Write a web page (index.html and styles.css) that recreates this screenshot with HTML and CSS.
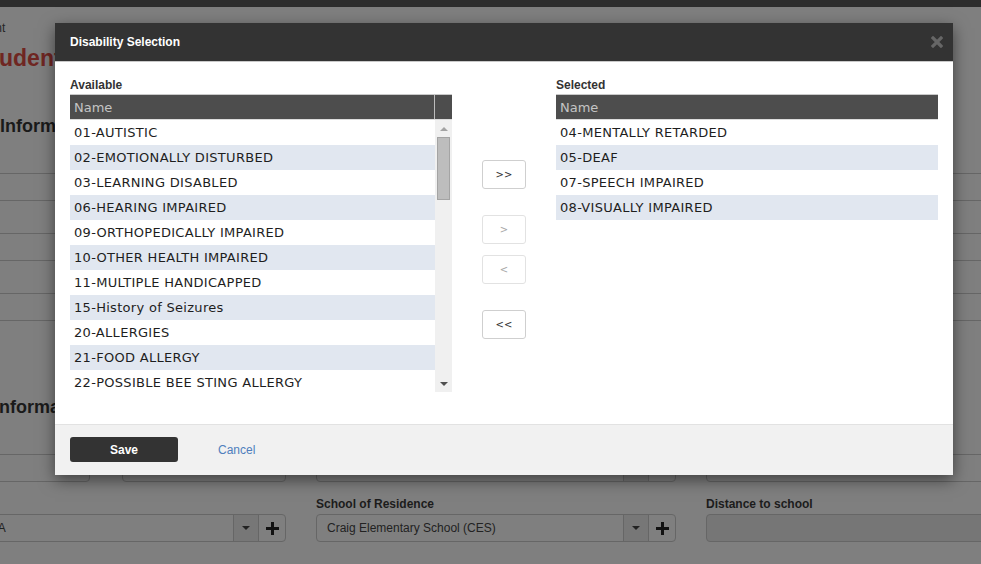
FILE: index.html
```html
<!DOCTYPE html>
<html lang="en">
<head>
<meta charset="utf-8">
<title>Disability Selection</title>
<link rel="stylesheet" href="styles.css">
</head>
<body>
<div class="page">
  <div class="topbar"></div>
  <div class="crumb">Student</div>
  <h1 class="page-title">Student Information</h1>
  <h2 class="section">Information</h2>
  <div class="fieldbox"></div>
  <div class="fieldbox"></div>
  <div class="fieldbox"></div>
  <h2 class="section section-2">Information</h2>
  <div class="form-row row-a">
    <div class="split">
      <div class="input w-a"></div>
      <div class="input grow"></div>
    </div>
    <div class="input combo">
      <span class="combo-text"></span>
      <span class="addon caret-addon"><span class="caret"></span></span>
      <span class="addon plus-addon"><svg width="13" height="13" viewBox="0 0 13 13"><rect x="5" y="0" width="3" height="13" fill="#121212"/><rect x="0" y="5" width="13" height="3" fill="#121212"/></svg></span>
    </div>
    <div class="input"></div>
  </div>
  <div class="form-row row-b">
    <div class="field">
      <div class="field-label">&nbsp;</div>
      <div class="input combo">
        <span class="combo-text">NA</span>
        <span class="addon caret-addon"><span class="caret"></span></span>
        <span class="addon plus-addon"><svg width="13" height="13" viewBox="0 0 13 13"><rect x="5" y="0" width="3" height="13" fill="#121212"/><rect x="0" y="5" width="13" height="3" fill="#121212"/></svg></span>
      </div>
    </div>
    <div class="field">
      <div class="field-label">School of Residence</div>
      <div class="input combo">
        <span class="combo-text">Craig Elementary School (CES)</span>
        <span class="addon caret-addon"><span class="caret"></span></span>
        <span class="addon plus-addon"><svg width="13" height="13" viewBox="0 0 13 13"><rect x="5" y="0" width="3" height="13" fill="#121212"/><rect x="0" y="5" width="13" height="3" fill="#121212"/></svg></span>
      </div>
    </div>
    <div class="field">
      <div class="field-label">Distance to school</div>
      <div class="input disabled"></div>
    </div>
  </div>
</div>

<div class="modal">
  <div class="modal-header">
    <span class="modal-title">Disability Selection</span>
    <span class="close"><svg width="12" height="12" viewBox="0 0 12 12"><path d="M2 2 L10 10 M10 2 L2 10" stroke="#666" stroke-width="3.2" stroke-linecap="square"/></svg></span>
  </div>
  <div class="modal-body">
    <div class="pane">
      <div class="pane-label">Available</div>
      <div class="grid-head">
        <div class="th">Name</div>
        <div class="th-scroll"></div>
      </div>
      <div class="grid-body">
        <div class="rows">
          <div class="row">01-AUTISTIC</div>
          <div class="row">02-EMOTIONALLY DISTURBED</div>
          <div class="row">03-LEARNING DISABLED</div>
          <div class="row">06-HEARING IMPAIRED</div>
          <div class="row">09-ORTHOPEDICALLY IMPAIRED</div>
          <div class="row">10-OTHER HEALTH IMPAIRED</div>
          <div class="row">11-MULTIPLE HANDICAPPED</div>
          <div class="row">15-History of Seizures</div>
          <div class="row">20-ALLERGIES</div>
          <div class="row">21-FOOD ALLERGY</div>
          <div class="row">22-POSSIBLE BEE STING ALLERGY</div>
          <div class="row">23-ASTHMA</div>
          <div class="row">24-DIABETES</div>
        </div>
        <div class="scrollbar">
          <span class="sb-btn"><span class="tri-up"></span></span>
          <span class="thumb"></span>
          <span class="sb-fill"></span>
          <span class="sb-btn"><span class="tri-down"></span></span>
        </div>
      </div>
    </div>
    <div class="mover">
      <button class="mv mv-all-right">&gt;&gt;</button>
      <button class="mv mv-right" disabled>&gt;</button>
      <button class="mv mv-left" disabled>&lt;</button>
      <button class="mv mv-all-left">&lt;&lt;</button>
    </div>
    <div class="pane">
      <div class="pane-label">Selected</div>
      <div class="grid-head">
        <div class="th">Name</div>
      </div>
      <div class="rows selected-rows">
        <div class="row">04-MENTALLY RETARDED</div>
        <div class="row">05-DEAF</div>
        <div class="row">07-SPEECH IMPAIRED</div>
        <div class="row">08-VISUALLY IMPAIRED</div>
      </div>
    </div>
  </div>
  <div class="modal-footer">
    <button class="btn-save">Save</button>
    <a class="btn-cancel">Cancel</a>
  </div>
</div>
</body>
</html>
```
FILE: styles.css
```css
html, body {
  margin: 0;
  padding: 0;
}
body {
  width: 981px;
  height: 564px;
  overflow: hidden;
  background: #7f7f7f;
  font-family: "Liberation Sans", Arial, sans-serif;
  font-size: 12px;
  position: relative;
}

/* ---------- dimmed page behind the dialog ---------- */
.page {
  overflow: hidden;
  height: 564px;
}
.topbar {
  height: 7px;
  background: #2d2d2d;
}
.crumb {
  margin: 14px 0 0 -36px;
  line-height: 14px;
  color: #262626;
}
.page-title {
  margin: 9px 0 0 -24px;
  font-size: 23px;
  line-height: 28px;
  font-weight: bold;
  color: #6f2622;
  white-space: nowrap;
}
.section {
  margin: 43px 0 0 0;
  font-size: 18px;
  line-height: 22px;
  font-weight: bold;
  color: #1a1a1a;
}
.section-2 {
  margin: 75px 0 0 -6px;
}
.fieldbox {
  height: 26px;
  border-top: 1px solid #666;
  border-bottom: 1px solid #666;
  margin-top: 32px;
}
.section + .fieldbox {
  margin-top: 36px;
}
.form-row {
  display: grid;
  grid-template-columns: 308px 360px 300px;
  column-gap: 30px;
  margin-left: -22px;
}
.row-a {
  margin-top: 36px;
}
.row-b {
  margin-top: 15px;
}
.split {
  display: flex;
  gap: 32px;
}
.w-a {
  width: 112px;
}
.grow {
  flex: 1;
}
.input {
  box-sizing: border-box;
  height: 28px;
  border: 1px solid #666;
  border-radius: 4px;
  background: #7f7f7f;
}
.input.disabled {
  background: #767676;
}
.combo {
  display: flex;
  align-items: stretch;
  overflow: hidden;
}
.combo-text {
  flex: 1;
  padding-left: 10px;
  line-height: 26px;
  font-size: 12px;
  color: #222;
  white-space: nowrap;
}
.addon {
  display: flex;
  align-items: center;
  justify-content: center;
  border-left: 1px solid #666;
}
.caret-addon {
  width: 24px;
  background: #777;
}
.plus-addon {
  width: 26px;
}
.caret {
  width: 0;
  height: 0;
  border-left: 4px solid transparent;
  border-right: 4px solid transparent;
  border-top: 4px solid #222;
}
.field-label {
  line-height: 14px;
  margin-bottom: 3px;
  font-weight: bold;
  color: #1c1c1c;
}

/* ---------- dialog ---------- */
.modal {
  position: absolute;
  left: 55px;
  top: 23px;
  width: 898px;
  background: #fff;
  box-shadow: 0 5px 15px rgba(0, 0, 0, 0.5);
}
.modal-header {
  height: 38px;
  background: #333;
  border-bottom: 1px solid #c9c9c9;
  display: flex;
  align-items: center;
  justify-content: space-between;
  padding: 0 10px 0 15px;
}
.modal-title {
  color: #fff;
  font-weight: bold;
  font-size: 12px;
}
.close {
  display: flex;
  width: 12px;
  height: 12px;
}
.modal-body {
  display: flex;
  padding: 16px 15px 32px 15px;
}
.pane {
  width: 382px;
}
.pane-label {
  line-height: 14px;
  margin-bottom: 2px;
  font-weight: bold;
  color: #333;
}
.grid-head {
  display: flex;
  height: 24px;
  background: #4d4d4d;
  border-top: 1px solid #c9c9c9;
  border-bottom: 1px solid #dcdcdc;
}
.th {
  flex: 1;
  padding-left: 4px;
  line-height: 25px;
  font-family: "DejaVu Sans", Verdana, sans-serif;
  font-size: 13px;
  color: #c4c4c4;
}
.th-scroll {
  width: 17px;
  border-left: 1px solid #bcbcbc;
}
.grid-body {
  display: flex;
  height: 272px;
  overflow: hidden;
}
.rows {
  flex: 1;
}
.row {
  height: 25px;
  line-height: 25px;
  padding-left: 4px;
  font-family: "DejaVu Sans", Verdana, sans-serif;
  font-size: 13px;
  letter-spacing: 0.3px;
  color: #1e1e1e;
  white-space: nowrap;
}
.row:nth-child(even) {
  background: #e1e7f0;
}
.scrollbar {
  width: 17px;
  background: #f0f0f0;
  display: flex;
  flex-direction: column;
  align-items: center;
}
.sb-btn {
  height: 17px;
  width: 17px;
  display: flex;
  align-items: center;
  justify-content: center;
}
.tri-up {
  width: 0;
  height: 0;
  border-left: 4px solid transparent;
  border-right: 4px solid transparent;
  border-bottom: 4px solid #a3a3a3;
}
.tri-down {
  width: 0;
  height: 0;
  border-left: 4px solid transparent;
  border-right: 4px solid transparent;
  border-top: 4px solid #505050;
}
.thumb {
  box-sizing: border-box;
  width: 13px;
  height: 63px;
  background: #bdbdbd;
  border: 1px solid #a4a4a4;
}
.sb-fill {
  flex: 1;
}
.mover {
  width: 104px;
  display: flex;
  flex-direction: column;
  align-items: center;
  padding-top: 82px;
}
.mv {
  box-sizing: border-box;
  width: 44px;
  height: 29px;
  padding: 0;
  background: #fff;
  border: 1px solid #cfcfcf;
  border-radius: 3px;
  font-family: "DejaVu Sans", Verdana, sans-serif;
  font-size: 10px;
  color: #333;
}
.mv:disabled {
  border-color: #e2e2e2;
  color: #a8a8a8;
}
.mv-right {
  margin-top: 26px;
}
.mv-left {
  margin-top: 11px;
}
.mv-all-left {
  margin-top: 26px;
}
.modal-footer {
  display: flex;
  align-items: center;
  background: #f1f1f1;
  border-top: 1px solid #e2e2e2;
  padding: 12px 15px 13px 15px;
}
.btn-save {
  width: 108px;
  height: 25px;
  border: 0;
  border-radius: 3px;
  background: #333;
  color: #fff;
  font-family: "Liberation Sans", Arial, sans-serif;
  font-weight: bold;
  font-size: 12px;
}
.btn-cancel {
  margin-left: 40px;
  color: #4f7fbd;
  font-size: 12px;
}
```
